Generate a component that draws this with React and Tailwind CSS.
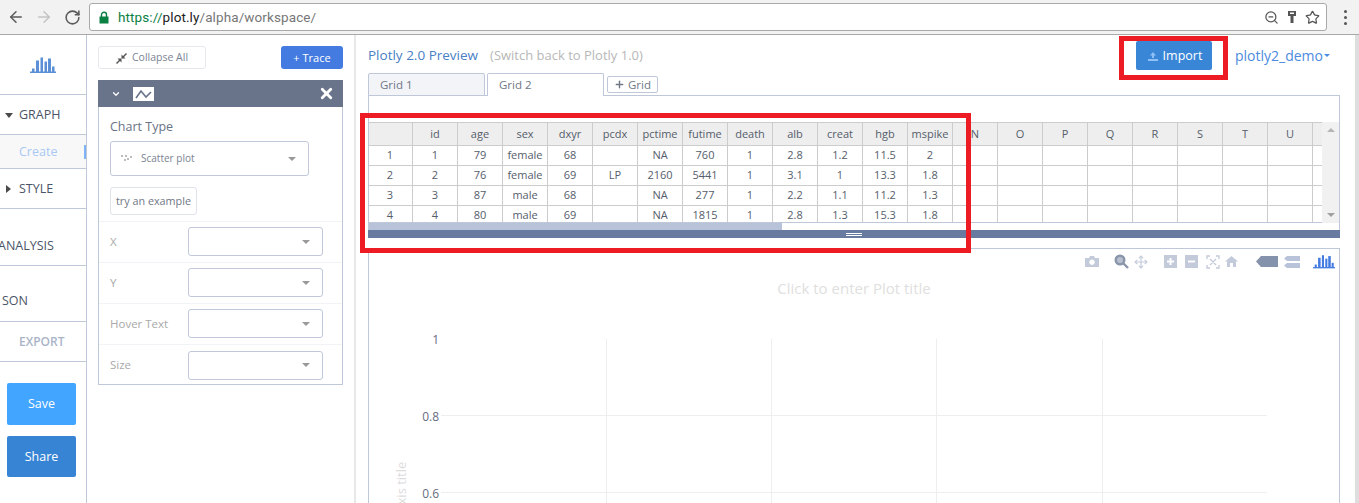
import React from "react";
import { ArrowLeft, ArrowRight, RotateCw, Star, ZoomOut, ChevronDown, X, Plus, Move } from "lucide-react";

const columns = ["", "id", "age", "sex", "dxyr", "pcdx", "pctime", "futime", "death", "alb", "creat", "hgb", "mspike", "N", "O", "P", "Q", "R", "S", "T", "U", ""];

const rows = [
  ["1", "1", "79", "female", "68", "", "NA", "760", "1", "2.8", "1.2", "11.5", "2"],
  ["2", "2", "76", "female", "69", "LP", "2160", "5441", "1", "3.1", "1", "13.3", "1.8"],
  ["3", "3", "87", "male", "68", "", "NA", "277", "1", "2.2", "1.1", "11.2", "1.3"],
  ["4", "4", "80", "male", "69", "", "NA", "1815", "1", "2.8", "1.3", "15.3", "1.8"],
];

function PlotlyBars({ className }) {
  return (
    <svg className={className} viewBox="0 0 26 16" fill="currentColor">
      <rect x="0" y="14" width="26" height="1.5" />
      <rect x="2" y="11" width="2.5" height="4" />
      <rect x="6" y="3" width="3" height="12" />
      <rect x="10.5" y="0" width="2.5" height="15" />
      <rect x="14.500" y="4" width="2.5" height="11" />
      <rect x="18" y="1" width="3" height="14" />
      <rect x="22" y="9" width="2.5" height="6" />
    </svg>
  );
}

function Caret({ className = "" }) {
  return <span className={`w-0 h-0 border-l-[4px] border-r-[4px] border-t-[4px] border-l-transparent border-r-transparent border-t-[#999] ${className}`} />;
}

function SideRow({ className = "", children }) {
  return <div className={`border-b border-[#bec8d9] flex items-center ${className}`}>{children}</div>;
}

function FieldRow({ label, last }) {
  return (
    <div className={`h-[41px] pl-[11px] pr-[19px] pb-px flex items-center justify-between text-[11.5px] text-[#a9a9a9] ${last ? "" : "border-b border-[#f1f3f7]"}`}>
      <span>{label}</span>
      <div className="w-[135px] h-[29px] border border-[#c0c8da] rounded-[3px] flex items-center justify-end pr-[12px]">
        <Caret />
      </div>
    </div>
  );
}

function Chart() {
  return (
    <svg className="w-full h-full" viewBox="0 0 970 254" style={{ fontFamily: "'Open Sans', sans-serif" }}>
      <text x="485" y="45" textAnchor="middle" fontSize="15" fill="#e0e0e0">Click to enter Plot title</text>
      {[237.5, 402.5, 567.5, 733.5].map((x) => (
        <line key={x} x1={x} x2={x} y1="90" y2="254" stroke="#eeeeee" />
      ))}
      {[166.5, 243.5].map((y) => (
        <line key={y} x1="72" x2="898" y1={y} y2={y} stroke="#eeeeee" />
      ))}
      <g fontSize="12" fill="#666c80" textAnchor="end">
        <text x="70" y="95">1</text>
        <text x="70" y="172">0.8</text>
        <text x="70" y="249">0.6</text>
      </g>
      <text transform="translate(37 243) rotate(-90)" fontSize="13" fill="#dcdcdc" textAnchor="middle">Y axis title</text>
    </svg>
  );
}

export default function App() {
  return (
    <div className="relative w-[1359px] h-[503px] overflow-hidden bg-white flex flex-col font-['Open_Sans',sans-serif] text-[#666]">
      {/* browser bar */}
      <div className="h-[35px] shrink-0 bg-[#f2f2f2] border-b border-[#a9a9a9] flex items-center pl-[7px]">
        <ArrowLeft size={18} strokeWidth={2} className="text-[#5a5a5a]" />
        <ArrowRight size={18} strokeWidth={2} className="text-[#c4c4c4] ml-[10px]" />
        <RotateCw size={17} strokeWidth={2.2} className="text-[#5a5a5a] ml-[11px]" />
        <div className="ml-[8px] w-[1238px] h-[28px] bg-white border border-[#a9a9a9] rounded-[3px] flex items-center pl-[9px] pr-[6px] font-['Roboto',sans-serif] text-[13.5px] tracking-[0.1px]">
          <svg width="10" height="13" viewBox="0 0 10 13" className="mr-[9px]">
            <path d="M2.5 6V3.8a2.5 2.5 0 0 1 5 0V6" fill="none" stroke="#0b8043" strokeWidth="1.4" />
            <rect x="0.5" y="5.500" width="9" height="7" fill="#0b8043" />
          </svg>
          <span className="text-[#0b8043]">https://</span>
          <span className="text-[#222]">plot.ly</span>
          <span className="text-[#777]">/alpha/workspace/</span>
          <div className="ml-auto flex items-center gap-[8px] text-[#555]">
            <ZoomOut size={15} />
            <svg width="10" height="14" viewBox="0 0 10 14" fill="#555">
              <path d="M1 1h8v5H6.500v7h-3V6H1z" />
              <rect x="3" y="2.500" width="4" height="1.500" fill="#fff" />
            </svg>
            <Star size={15} strokeWidth={2} />
          </div>
        </div>
        <div className="ml-[17px] flex flex-col gap-[3px]">
          <span className="w-[3px] h-[3px] rounded-full bg-[#555]" />
          <span className="w-[3px] h-[3px] rounded-full bg-[#555]" />
          <span className="w-[3px] h-[3px] rounded-full bg-[#555]" />
        </div>
      </div>

      <div className="flex flex-1 min-h-0">
        {/* left nav */}
        <div className="w-[87px] shrink-0 border-r border-[#bec8d9] text-[12.5px] font-medium text-[#4b5568] overflow-hidden">
          <SideRow className="h-[60px] justify-center">
            <PlotlyBars className="w-[26px] h-[17px] text-[#5b8fd6] mt-[2px]" />
          </SideRow>
          <SideRow className="h-[40px] pl-[5px] pt-px">
            <span className="w-0 h-0 border-l-[4px] border-r-[4px] border-t-[5px] border-l-transparent border-r-transparent border-t-[#4a4a4a] mr-[6px]" />
            GRAPH
          </SideRow>
          <SideRow className="h-[34px] bg-[#f8f8f8] justify-between pl-[19px] pt-px font-normal text-[#a9c8f5]">
            Create
            <span className="w-[2px] h-[14px] bg-[#7fb4f7]" />
          </SideRow>
          <SideRow className="h-[40px] pl-[6px] pt-px">
            <span className="w-0 h-0 border-t-[4px] border-b-[4px] border-l-[5px] border-t-transparent border-b-transparent border-l-[#4a4a4a] mr-[8px]" />
            STYLE
          </SideRow>
          <SideRow className="h-[57px] pt-[18px] -ml-[2px] whitespace-nowrap">ANALYSIS</SideRow>
          <SideRow className="h-[56px] pt-[15px] pl-[2px]">SON</SideRow>
          <SideRow className="h-[40px] pl-[19px] font-semibold text-[12px] text-[#aab4c8]">EXPORT</SideRow>
          <div className="pl-[7px] pt-[21px] flex flex-col gap-[11px] font-normal text-white">
            <div className="w-[69px] h-[42px] pt-px rounded-[2px] bg-[#42a5ff] flex items-center justify-center">Save</div>
            <div className="w-[69px] h-[41px] pt-px rounded-[2px] bg-[#3884d4] flex items-center justify-center">Share</div>
          </div>
        </div>

        {/* trace panel */}
        <div className="w-[269px] shrink-0 pl-[11px] pr-[11px] pt-[11px] border-r-[2px] border-[#e8e8e8]">
          <div className="flex justify-between">
            <div className="w-[108px] h-[23px] pt-px border border-[#e6e8ee] rounded-[3px] flex items-center justify-center gap-[5px] text-[10.5px] text-[#7b8494]">
              <svg width="11" height="11" viewBox="0 0 11 11" fill="#555">
                <path d="M10 0 11 1 8 4l1.500 1.500H5.500v-4L7 3zM1 11 0 10l3-3-1.500-1.500h4v4L4 8z" />
              </svg>
              Collapse All
            </div>
            <div className="w-[62px] h-[23px] pt-px rounded-[3px] bg-[#447be0] text-white text-[11px] flex items-center justify-center">+ Trace</div>
          </div>
          <div className="mt-[11px] h-[27px] bg-[#69738a] flex items-center pl-[13px] pr-[8px] text-white">
            <ChevronDown size={10} strokeWidth={3} />
            <div className="ml-[12px] w-[21px] h-[14px] bg-white flex items-center justify-center">
              <svg width="17" height="10" viewBox="0 0 17 10" fill="none" stroke="#69738a" strokeWidth="1.6">
                <path d="M1 9 6 2l5 6 5-5" />
              </svg>
            </div>
            <X size={17} strokeWidth={4} className="ml-auto" />
          </div>
          <div className="h-[278px] border border-t-0 border-[#bec8d9]">
            <div className="h-[114px] pl-[11px] pt-[11px]">
              <div className="text-[12.5px] leading-[18px] text-[#6a7385]">Chart Type</div>
              <div className="mt-[5px] w-[199px] h-[35px] border border-[#c0c8da] rounded-[3px] flex items-center pl-[10px] pr-[12px] text-[10px] text-[#7a8290]">
                <svg width="11" height="7" viewBox="0 0 11 7" fill="#666" className="mr-[9px]">
                  <circle cx="1" cy="1" r="0.8" />
                  <circle cx="4" cy="5" r="0.8" />
                  <circle cx="5" cy="1" r="0.8" />
                  <circle cx="7" cy="4" r="0.8" />
                  <circle cx="10" cy="2" r="0.8" />
                </svg>
                Scatter plot
                <Caret className="ml-auto" />
              </div>
              <div className="mt-[11px] w-[87px] h-[28px] border border-[#dfe3ec] rounded-[3px] flex items-center justify-center text-[10.8px] text-[#6f7786]">try an example</div>
            </div>
            <div className="border-t border-[#f1f3f7]">
              <FieldRow label="X" />
              <FieldRow label="Y" />
              <FieldRow label="Hover Text" />
              <FieldRow label="Size" last />
            </div>
          </div>
        </div>

        {/* workspace */}
        <div className="flex-1 min-w-0 pl-[12px] pr-[15px] border-r-[4px] border-[#dedede] overflow-hidden">
          <div className="h-[38px] flex items-center justify-between">
            <div className="flex items-baseline pt-[2px]">
              <span className="text-[13.5px] text-[#4a80c4]">Plotly 2.0 Preview</span>
              <span className="ml-[12px] text-[13px] text-[#b7b7b7]">(Switch back to Plotly 1.0)</span>
            </div>
            <div className="flex items-center pr-[10px] pt-[2px]">
              <div className="w-[76px] h-[29px] pt-[2px] rounded-[2px] bg-[#3a86d6] text-white text-[12.5px] flex items-center justify-center gap-[5px] pl-[2px]">
                <svg width="10" height="9" viewBox="0 0 10 9" fill="#8fc0f5">
                  <path d="M5 0 8 3.500H6V6H4V3.500H2zM0 7h10v2H0z" />
                </svg>
                Import
              </div>
              <span className="ml-[23px] text-[14px] text-[#4c8be0]">plotly2_demo</span>
              <span className="ml-[1px] w-0 h-0 border-l-[3px] border-r-[3px] border-t-[3px] border-l-transparent border-r-transparent border-t-[#4c8be0]" />
            </div>
          </div>

          {/* tabs */}
          <div className="h-[23px] flex text-[11.5px] text-[#6f7786] relative z-10">
            <div className="w-[117px] h-[23px] bg-[#f3f4f8] border border-[#bec8d9] rounded-t-[2px] flex items-center pl-[11px]">Grid 1</div>
            <div className="ml-[2px] w-[117px] h-[23px] bg-white border border-b-0 border-[#bec8d9] rounded-t-[2px] flex items-center pl-[11px]">Grid 2</div>
            <div className="ml-[3px] mt-[3px] w-[51px] h-[17px] bg-white border border-[#bec8d9] rounded-[2px] flex items-center justify-center gap-[3px]">
              <Plus size={11} strokeWidth={3} />
              Grid
            </div>
          </div>

          {/* grid box */}
          <div className="-mt-px border border-b-0 border-[#bec8d9] h-[143px] pt-[26px] w-[972px]">
            <div className="flex h-[101px]">
              <div className="w-[955px] overflow-hidden border-b border-[#bec8d9]">
                <table className="table-fixed border-collapse text-[11px] text-[#555d6b] w-[990px] -ml-[2px]">
                  <colgroup>
                    {columns.map((c, i) => (
                      <col key={i} className="w-[45px]" />
                    ))}
                  </colgroup>
                  <thead>
                    <tr className="h-[23px] bg-[#eeeeee]">
                      {columns.map((c, i) => (
                        <th key={i} className="border border-[#cccccc] font-normal p-0 pt-px text-center">{c}</th>
                      ))}
                    </tr>
                  </thead>
                  <tbody>
                    {rows.map((row, r) => (
                      <tr key={r} className="h-[20px]">
                        {columns.map((c, i) => (
                          <td key={i} className="border border-[#cccccc] p-0 pb-px text-center leading-[18px]">{row[i] || ""}</td>
                        ))}
                      </tr>
                    ))}
                  </tbody>
                </table>
              </div>
              <div className="w-[17px] bg-[#f1f1f1] flex flex-col items-center justify-between py-[6px]">
                <span className="w-0 h-0 border-l-[4px] border-r-[4px] border-b-[4px] border-l-transparent border-r-transparent border-b-[#b5b5b5]" />
                <span className="w-0 h-0 border-l-[4px] border-r-[4px] border-t-[4px] border-l-transparent border-r-transparent border-t-[#a0a0a0]" />
              </div>
            </div>
            <div className="h-[7px] w-[955px]">
              <div className="h-[7px] w-[413px] bg-[#b8c2d8]" />
            </div>
            <div className="-mx-px h-[8px] bg-[#697aa1] flex flex-col items-center justify-center gap-[1px]">
              <span className="w-[16px] h-px bg-white" />
              <span className="w-[16px] h-px bg-white" />
            </div>
          </div>

          {/* plot box */}
          <div className="mt-[10px] w-[972px] h-[255px] border border-b-0 border-[#bec8d9] relative">
            <Chart />
            <div className="absolute top-[5px] right-[4px] flex items-center text-[#c3cad9]">
              <svg width="14" height="11" viewBox="0 0 14 11" fill="currentColor" className="mr-[15px]">
                <path fillRule="evenodd" d="M0 2h4l1-2h4l1 2h4v9H0zM7 3.500a2.700 2.700 0 1 0 .01 0z" />
              </svg>
              <svg width="15" height="15" viewBox="0 0 15 15" fill="none" stroke="#8a94aa" strokeWidth="2.4" className="mr-[5px]">
                <circle cx="6" cy="6" r="4.300" fill="#b8c0d0" />
                <path d="m9.500 9.500 4.500 4.500" />
              </svg>
              <Move size={14} strokeWidth={2} className="mr-[16px]" />
              <svg width="13" height="13" viewBox="0 0 13 13" fill="currentColor" className="mr-[8px]">
                <path fillRule="evenodd" d="M0 0h13v13H0zM5.500 3v2.500H3v2h2.500V10h2V7.500H10v-2H7.500V3z" />
              </svg>
              <svg width="13" height="13" viewBox="0 0 13 13" fill="currentColor" className="mr-[8px]">
                <path fillRule="evenodd" d="M0 0h13v13H0zM3 5.500v2h7v-2z" />
              </svg>
              <svg width="14" height="14" viewBox="0 0 14 14" fill="none" stroke="currentColor" strokeWidth="1.300" className="mr-[5px]">
                <path d="M1 4V1h3M10 1h3v3M13 10v3h-3M4 13H1v-3M4 4l6 6M10 4l-6 6" />
              </svg>
              <svg width="13" height="11" viewBox="0 0 13 11" fill="currentColor" className="mr-[18px]">
                <path d="M6.500 0 13 5.500h-2V11H8V7H5v4H2V5.500H0z" />
              </svg>
              <svg width="22" height="11" viewBox="0 0 22 11" fill="#8592ab" className="mr-[6px]">
                <path d="M5 0h17v11H5L0 5.500z" />
              </svg>
              <svg width="16" height="12" viewBox="0 0 16 12" fill="#b8c2d8" className="mr-[13px]">
                <path d="M3 0h13v5H3L0 2.500zM3 7h13v5H3L0 9.500z" />
              </svg>
              <PlotlyBars className="w-[22px] h-[14px] text-[#447be0]" />
            </div>
          </div>
        </div>
      </div>

      {/* red annotation boxes drawn over the screenshot */}
      <div className="absolute left-[360px] top-[113px] w-[611px] h-[140px] border-[5px] border-[#ed1c24] z-20" />
      <div className="absolute left-[1119px] top-[36px] w-[109px] h-[44px] border-[5px] border-[#ed1c24] z-20" />
    </div>
  );
}
